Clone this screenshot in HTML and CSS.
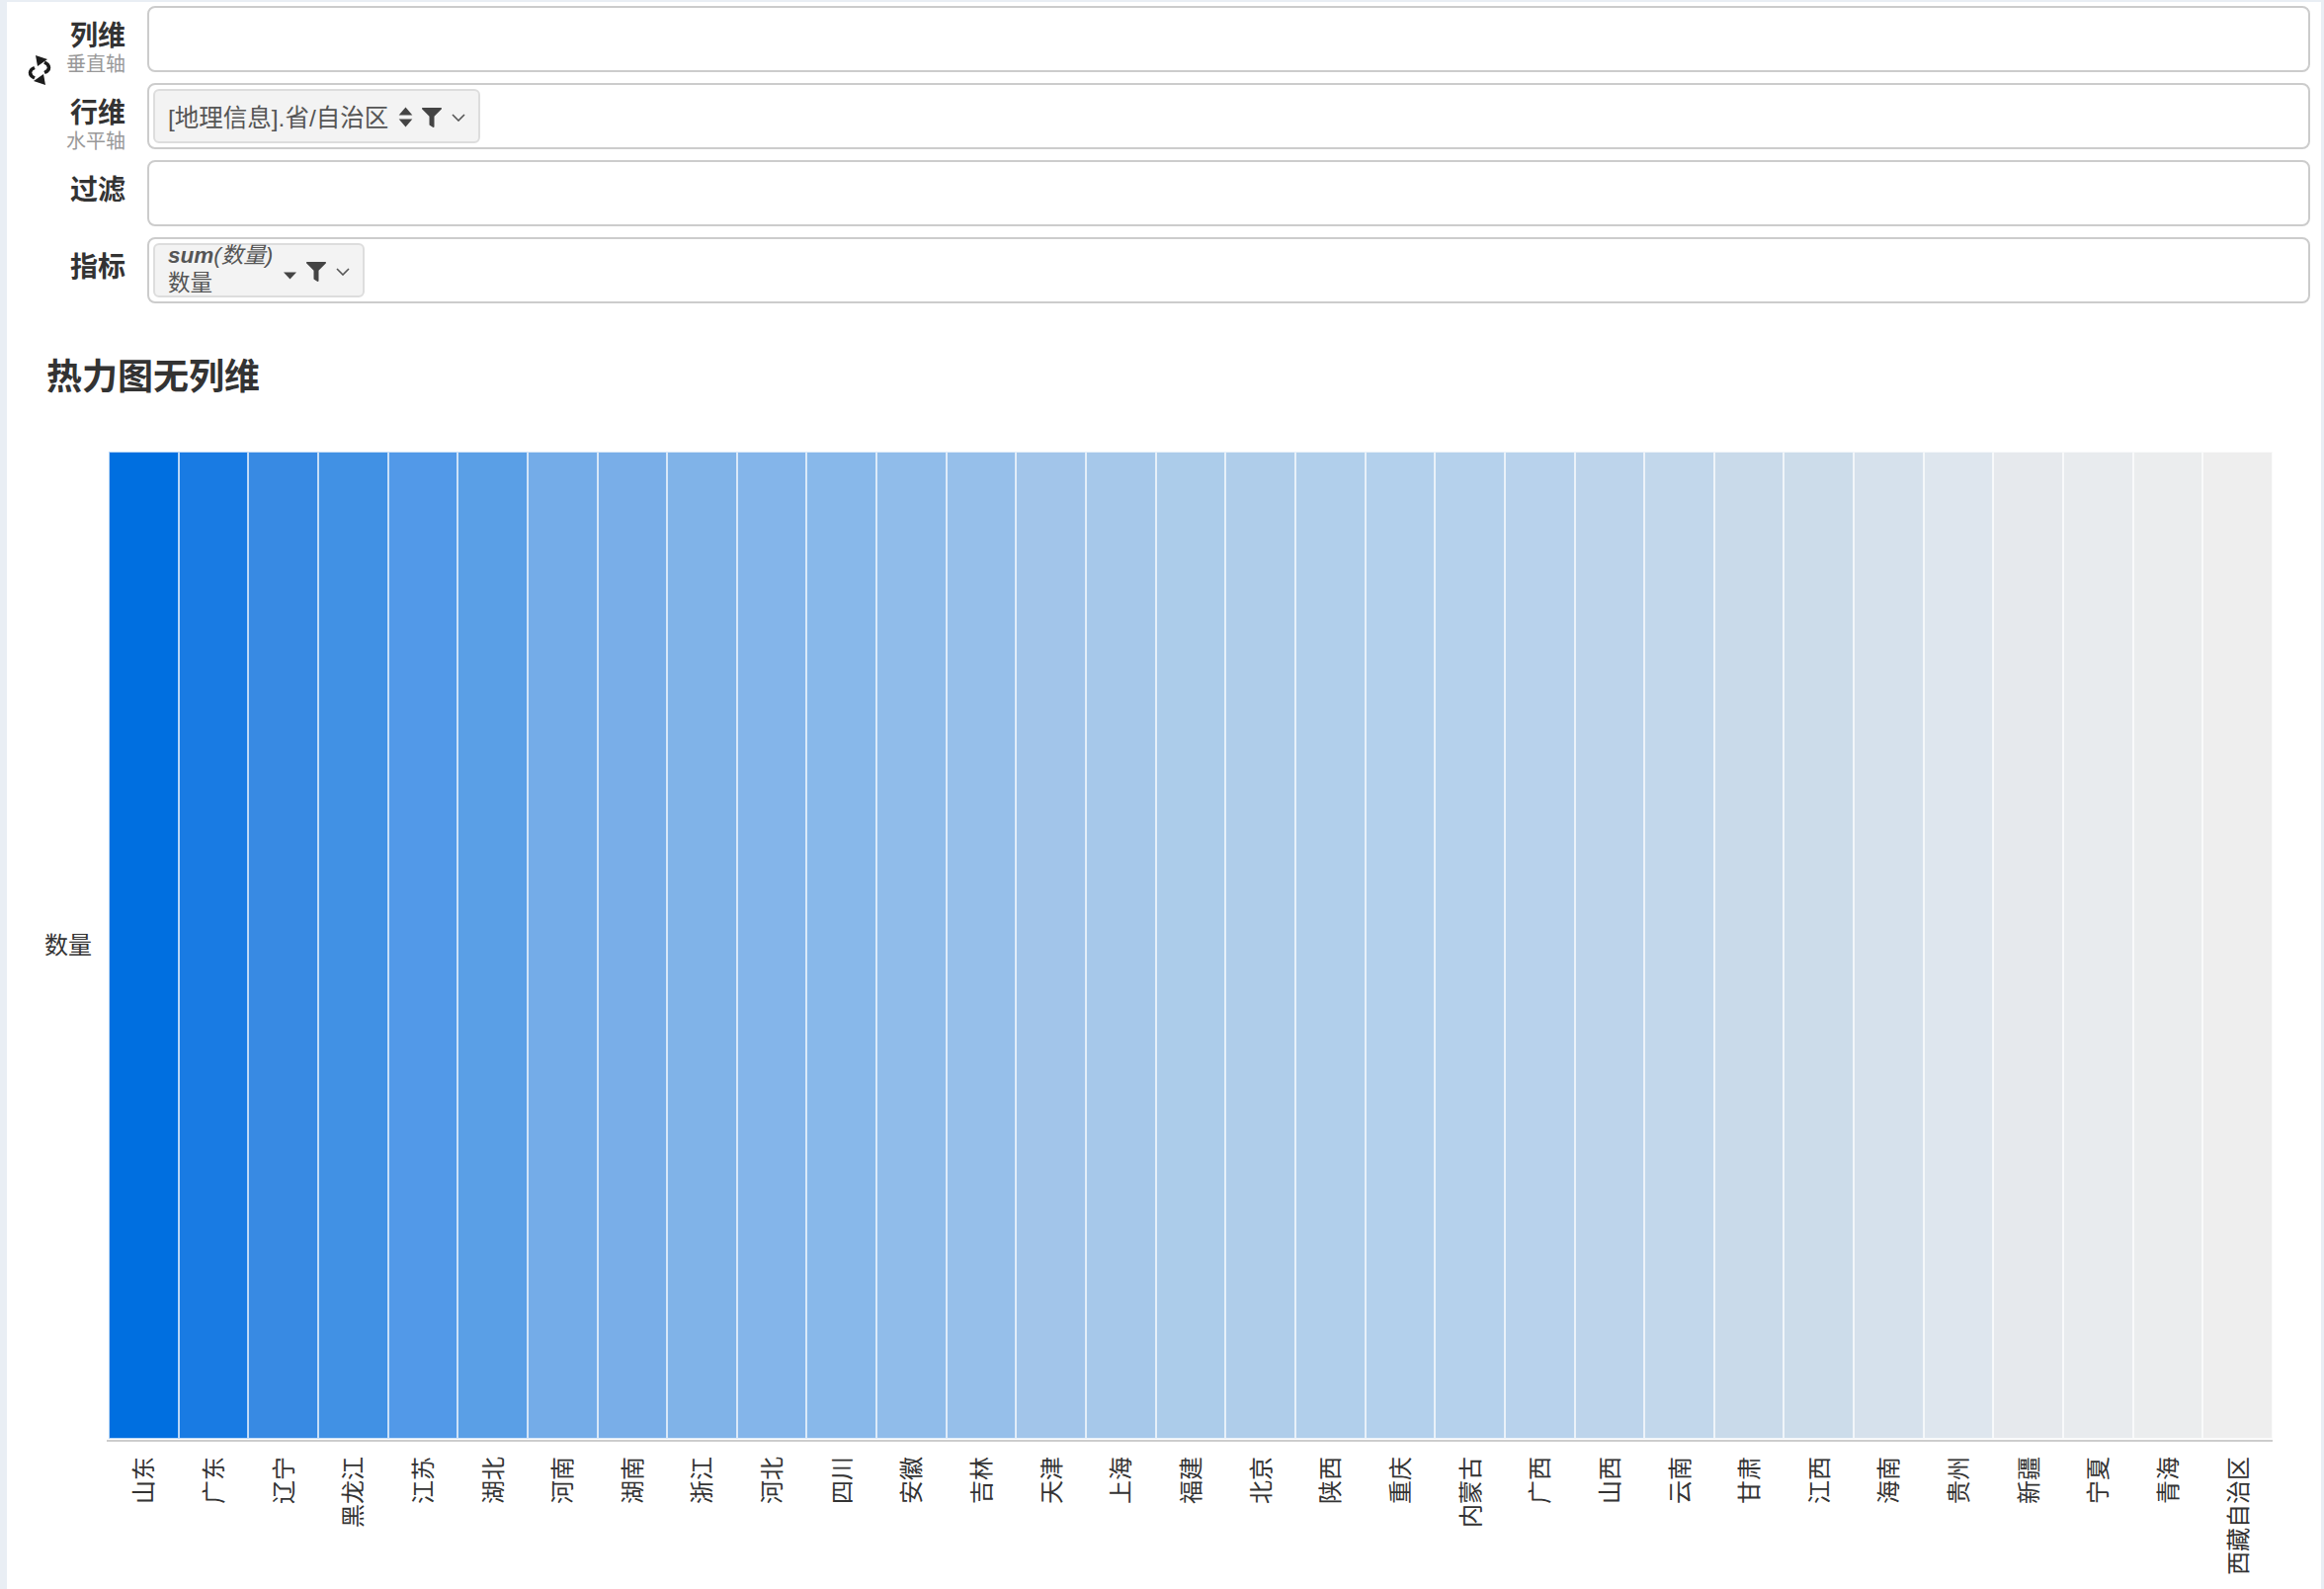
FILE: index.html
```html
<!DOCTYPE html>
<html lang="zh">
<head>
<meta charset="utf-8">
<title>热力图无列维</title>
<link rel="stylesheet" href="styles.css">
</head>
<body>
<main class="panel">
  <section class="shelves">
    <svg class="swap" viewBox="0 0 24 32" aria-hidden="true">
      <path class="swap-line" d="M17 8 C23 11 23 16 17 18.5"/>
      <path class="swap-line" d="M7 24 C1 21 1 16 7 13.5"/>
      <polygon class="swap-head" points="8,1 20,5 10,12"/>
      <polygon class="swap-head" points="18,31 6,27 16,20"/>
    </svg>
    <div class="shelf">
      <div class="shelf-label"><span class="name">列维</span><span class="hint">垂直轴</span></div>
      <div class="dropzone"></div>
    </div>
    <div class="shelf">
      <div class="shelf-label"><span class="name">行维</span><span class="hint">水平轴</span></div>
      <div class="dropzone">
        <div class="pill pill-row">
          <span class="pill-text">[地理信息].省/自治区</span>
          <svg class="ico ico-sort" viewBox="0 0 14 20"><path d="M7 0.5 L13.5 8 H0.5 Z M0.5 12 H13.5 L7 19.5 Z"/></svg>
          <svg class="ico ico-filter" viewBox="0 0 512 512"><path d="M487.976 0H24.028C2.71 0-8.047 25.866 7.058 40.971L192 225.941V432c0 7.831 3.821 15.17 10.237 19.662l80 55.98C298.02 518.69 320 507.493 320 487.98V225.941l184.947-184.97C520.021 25.896 509.338 0 487.976 0z"/></svg>
          <svg class="ico ico-down" viewBox="0 0 14 8"><path d="M1 1 L7 7 L13 1"/></svg>
        </div>
      </div>
    </div>
    <div class="shelf">
      <div class="shelf-label"><span class="name">过滤</span></div>
      <div class="dropzone"></div>
    </div>
    <div class="shelf">
      <div class="shelf-label"><span class="name">指标</span></div>
      <div class="dropzone">
        <div class="pill pill-measure">
          <div class="pill-stack">
            <span class="pill-func"><b>sum</b>(数量)</span>
            <span class="pill-alias">数量</span>
          </div>
          <svg class="ico ico-caret" viewBox="0 0 14 8"><path d="M0.5 0.5 H13.5 L7 7.5 Z"/></svg>
          <svg class="ico ico-filter" viewBox="0 0 512 512"><path d="M487.976 0H24.028C2.71 0-8.047 25.866 7.058 40.971L192 225.941V432c0 7.831 3.821 15.17 10.237 19.662l80 55.98C298.02 518.69 320 507.493 320 487.98V225.941l184.947-184.97C520.021 25.896 509.338 0 487.976 0z"/></svg>
          <svg class="ico ico-down" viewBox="0 0 14 8"><path d="M1 1 L7 7 L13 1"/></svg>
        </div>
      </div>
    </div>
  </section>

  <h1 class="title">热力图无列维</h1>

  <section class="chart">
    <div class="y-label">数量</div>
    <div class="plot">
      <div class="cell" style="background:#006fe0"></div>
      <div class="cell" style="background:#197be3"></div>
      <div class="cell" style="background:#388ae3"></div>
      <div class="cell" style="background:#4191e4"></div>
      <div class="cell" style="background:#5299e8"></div>
      <div class="cell" style="background:#5a9fe6"></div>
      <div class="cell" style="background:#74ace8"></div>
      <div class="cell" style="background:#79aee8"></div>
      <div class="cell" style="background:#80b3e8"></div>
      <div class="cell" style="background:#84b5ea"></div>
      <div class="cell" style="background:#88b8ea"></div>
      <div class="cell" style="background:#90bcea"></div>
      <div class="cell" style="background:#96bfea"></div>
      <div class="cell" style="background:#a2c5ea"></div>
      <div class="cell" style="background:#a6c8ea"></div>
      <div class="cell" style="background:#acccea"></div>
      <div class="cell" style="background:#afcdea"></div>
      <div class="cell" style="background:#b1cfeb"></div>
      <div class="cell" style="background:#b3d0ec"></div>
      <div class="cell" style="background:#b5d1ec"></div>
      <div class="cell" style="background:#b8d2ec"></div>
      <div class="cell" style="background:#bdd4eb"></div>
      <div class="cell" style="background:#c2d7eb"></div>
      <div class="cell" style="background:#c9daea"></div>
      <div class="cell" style="background:#ccdcea"></div>
      <div class="cell" style="background:#d6e1ec"></div>
      <div class="cell" style="background:#dee6ee"></div>
      <div class="cell" style="background:#e6e9ed"></div>
      <div class="cell" style="background:#e8ebee"></div>
      <div class="cell" style="background:#ebedee"></div>
      <div class="cell" style="background:#eeeeee"></div>
    </div>
    <div class="x-axis">
      <div class="tick"><span>山东</span></div>
      <div class="tick"><span>广东</span></div>
      <div class="tick"><span>辽宁</span></div>
      <div class="tick"><span>黑龙江</span></div>
      <div class="tick"><span>江苏</span></div>
      <div class="tick"><span>湖北</span></div>
      <div class="tick"><span>河南</span></div>
      <div class="tick"><span>湖南</span></div>
      <div class="tick"><span>浙江</span></div>
      <div class="tick"><span>河北</span></div>
      <div class="tick"><span>四川</span></div>
      <div class="tick"><span>安徽</span></div>
      <div class="tick"><span>吉林</span></div>
      <div class="tick"><span>天津</span></div>
      <div class="tick"><span>上海</span></div>
      <div class="tick"><span>福建</span></div>
      <div class="tick"><span>北京</span></div>
      <div class="tick"><span>陕西</span></div>
      <div class="tick"><span>重庆</span></div>
      <div class="tick"><span>内蒙古</span></div>
      <div class="tick"><span>广西</span></div>
      <div class="tick"><span>山西</span></div>
      <div class="tick"><span>云南</span></div>
      <div class="tick"><span>甘肃</span></div>
      <div class="tick"><span>江西</span></div>
      <div class="tick"><span>海南</span></div>
      <div class="tick"><span>贵州</span></div>
      <div class="tick"><span>新疆</span></div>
      <div class="tick"><span>宁夏</span></div>
      <div class="tick"><span>青海</span></div>
      <div class="tick"><span>西藏自治区</span></div>
    </div>
  </section>
</main>
</body>
</html>
```

FILE: styles.css
```css
* { box-sizing: border-box; }

html, body { height: 100%; }

body {
  margin: 0;
  padding: 2px 3px 0 7px;
  overflow: hidden;
  background: #e9eef4;
  font-family: "Liberation Sans", "Noto Sans CJK SC", sans-serif;
  color: #333;
}

.panel {
  height: 100%;
  background: #fff;
  padding-top: 4px;
}

.shelves {
  position: relative;
  display: flex;
  flex-direction: column;
  gap: 11px;
  padding-right: 11px;
}

.swap {
  position: absolute;
  left: 21px;
  top: 49px;
  width: 24px;
  height: 32px;
}
.swap-line { fill: none; stroke: #1c1c1c; stroke-width: 3.5; }
.swap-head { fill: #1c1c1c; }

.shelf {
  display: flex;
  height: 67px;
}

.shelf-label {
  flex: 0 0 142px;
  padding: 13px 22px 0 0;
  display: flex;
  flex-direction: column;
  align-items: flex-end;
}
.name {
  font-size: 28px;
  line-height: 36px;
  font-weight: 700;
  color: #333;
}
.hint {
  font-size: 20px;
  line-height: 22px;
  margin-top: -1px;
  color: #999;
}

.dropzone {
  flex: 1;
  border: 2px solid #ccc;
  border-radius: 8px;
  padding: 4px;
  display: flex;
  align-items: flex-start;
}

.pill {
  height: 55px;
  background: #f3f3f3;
  border: 2px solid #ddd;
  border-radius: 6px;
  display: flex;
  align-items: center;
  font-size: 24.5px;
  color: #555;
}
.pill-row { width: 331px; padding: 5px 13px 0; }
.pill-measure { width: 214px; padding: 3px 13px 0; }

.pill-row .ico { margin-top: -3px; }

.pill-text { white-space: nowrap; line-height: 30px; }

.pill-stack {
  flex: 0 0 116px;
  display: flex;
  flex-direction: column;
  align-self: flex-start;
  margin-top: -5px;
}
.pill-func {
  font-style: italic;
  font-size: 22.5px;
  line-height: 25px;
  white-space: nowrap;
}
.pill-alias { font-size: 22.5px; line-height: 30px; margin-top: 1px; }

.ico { flex: none; fill: #444; display: block; }
.ico-sort { width: 15px; height: 21px; margin-left: 10px; }
.ico-filter { width: 20px; height: 20px; margin-left: 9px; }
.ico-down {
  width: 14px;
  height: 8px;
  margin-left: 10px;
  fill: none;
  stroke: #555;
  stroke-width: 1.6;
}
.ico-caret { width: 15px; height: 8px; margin-top: 8px; }

.title {
  margin: 50px 0 0 40px;
  font-size: 36px;
  line-height: 50px;
  font-weight: 700;
  color: #333;
}

.chart {
  display: grid;
  grid-template-columns: 103px 2190px;
  grid-template-rows: 999px auto;
  margin-top: 50px;
}

.y-label {
  align-self: center;
  padding-left: 38px;
  font-size: 24px;
  line-height: 32px;
  white-space: nowrap;
}

.plot {
  display: grid;
  grid-template-columns: repeat(31, 1fr);
}

.cell { border: 1px solid rgba(255, 255, 255, 0.7); }

.x-axis {
  grid-column: 2;
  display: grid;
  grid-template-columns: repeat(31, 1fr);
  padding: 15px 1px 0 1px;
  margin-left: -2px;
  border-top: 2px solid #ccc;
  margin-top: 1px;
}

.tick {
  display: flex;
  justify-content: center;
  align-items: flex-start;
}
.tick span {
  writing-mode: vertical-rl;
  text-orientation: sideways;
  transform: rotate(180deg);
  font-size: 24px;
  line-height: 24px;
  white-space: nowrap;
  font-family: "Noto Sans CJK SC", sans-serif;
}
```
